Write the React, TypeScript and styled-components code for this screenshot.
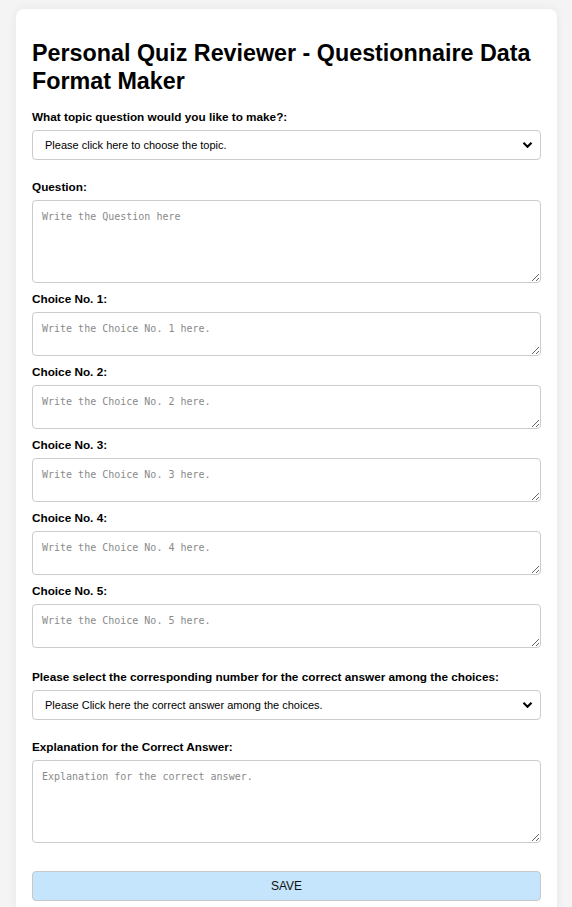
import styled, { createGlobalStyle } from "styled-components";

const GlobalStyle = createGlobalStyle`
  html, body {
    margin: 0;
    padding: 0;
    background: #f4f4f4;
    font-family: "Liberation Sans", Arial, sans-serif;
  }
`;

const Page = styled.div`
  padding: 9px 15px 0 16px;
  min-height: 907px;
  box-sizing: border-box;
`;

const Card = styled.form`
  background: #ffffff;
  border-radius: 8px;
  padding: 16px;
  box-shadow: 0 0 10px rgba(0, 0, 0, 0.06);
  display: flex;
  flex-direction: column;
`;

const Title = styled.h1`
  margin: 15px 0 15px;
  font-size: 23.3px;
  line-height: 27.6px;
  font-weight: 700;
  color: #000;
`;

const Field = styled.div<{ $after: number }>`
  display: flex;
  flex-direction: column;
  margin-bottom: ${(p) => p.$after}px;
`;

const Label = styled.label`
  font-size: 11.75px;
  line-height: 14px;
  font-weight: 700;
  color: #000;
  margin-bottom: 6px;
`;

const SelectWrap = styled.div`
  position: relative;
`;

const Select = styled.select`
  appearance: none;
  width: 100%;
  height: 30px;
  box-sizing: border-box;
  border: 1px solid #cccccc;
  border-radius: 4px;
  background: #fff;
  padding: 0 30px 0 12px;
  font-family: "Liberation Sans", Arial, sans-serif;
  font-size: 11px;
  color: #000;
`;

const Chevron = styled.svg`
  position: absolute;
  right: 8px;
  top: 11px;
  width: 11px;
  height: 8px;
  pointer-events: none;
`;

const TextArea = styled.textarea<{ $height: number }>`
  display: block;
  width: 100%;
  height: ${(p) => p.$height}px;
  box-sizing: border-box;
  border: 1px solid #cccccc;
  border-radius: 4px;
  padding: 9px 9px 8px;
  font-family: "DejaVu Sans Mono", "Liberation Mono", monospace;
  font-size: 10px;
  line-height: 13px;
  color: #000;
  resize: vertical;

  &::placeholder {
    color: #8a8a8a;
  }
`;

const SaveButton = styled.button`
  height: 30px;
  width: 100%;
  border: 1px solid #c8c8c8;
  border-radius: 4px;
  background: #c4e5fc;
  font-family: "Liberation Sans", Arial, sans-serif;
  font-size: 12px;
  color: #111;
  cursor: pointer;
`;

function ChevronIcon() {
  return (
    <Chevron viewBox="0 0 11 8" aria-hidden="true">
      <path d="M1.5 1.8 L5.5 5.8 L9.5 1.8" fill="none" stroke="#000" strokeWidth="2.2" />
    </Chevron>
  );
}

const choices = [1, 2, 3, 4, 5];

export default function App() {
  return (
    <>
      <GlobalStyle />
      <Page>
        <Card onSubmit={(e) => e.preventDefault()}>
          <Title>Personal Quiz Reviewer - Questionnaire Data Format Maker</Title>

          <Field $after={20}>
            <Label htmlFor="topic">What topic question would you like to make?:</Label>
            <SelectWrap>
              <Select id="topic" defaultValue="">
                <option value="">Please click here to choose the topic.</option>
              </Select>
              <ChevronIcon />
            </SelectWrap>
          </Field>

          <Field $after={9}>
            <Label htmlFor="question">Question:</Label>
            <TextArea id="question" $height={83} placeholder="Write the Question here" />
          </Field>

          {choices.map((n) => (
            <Field key={n} $after={n === 5 ? 22 : 9}>
              <Label htmlFor={`choice${n}`}>Choice No. {n}:</Label>
              <TextArea id={`choice${n}`} $height={44} placeholder={`Write the Choice No. ${n} here.`} />
            </Field>
          ))}

          <Field $after={20}>
            <Label htmlFor="answer">
              Please select the corresponding number for the correct answer among the choices:
            </Label>
            <SelectWrap>
              <Select id="answer" defaultValue="">
                <option value="">Please Click here the correct answer among the choices.</option>
              </Select>
              <ChevronIcon />
            </SelectWrap>
          </Field>

          <Field $after={28}>
            <Label htmlFor="explanation">Explanation for the Correct Answer:</Label>
            <TextArea id="explanation" $height={83} placeholder="Explanation for the correct answer." />
          </Field>

          <SaveButton type="submit">SAVE</SaveButton>
        </Card>
      </Page>
    </>
  );
}
